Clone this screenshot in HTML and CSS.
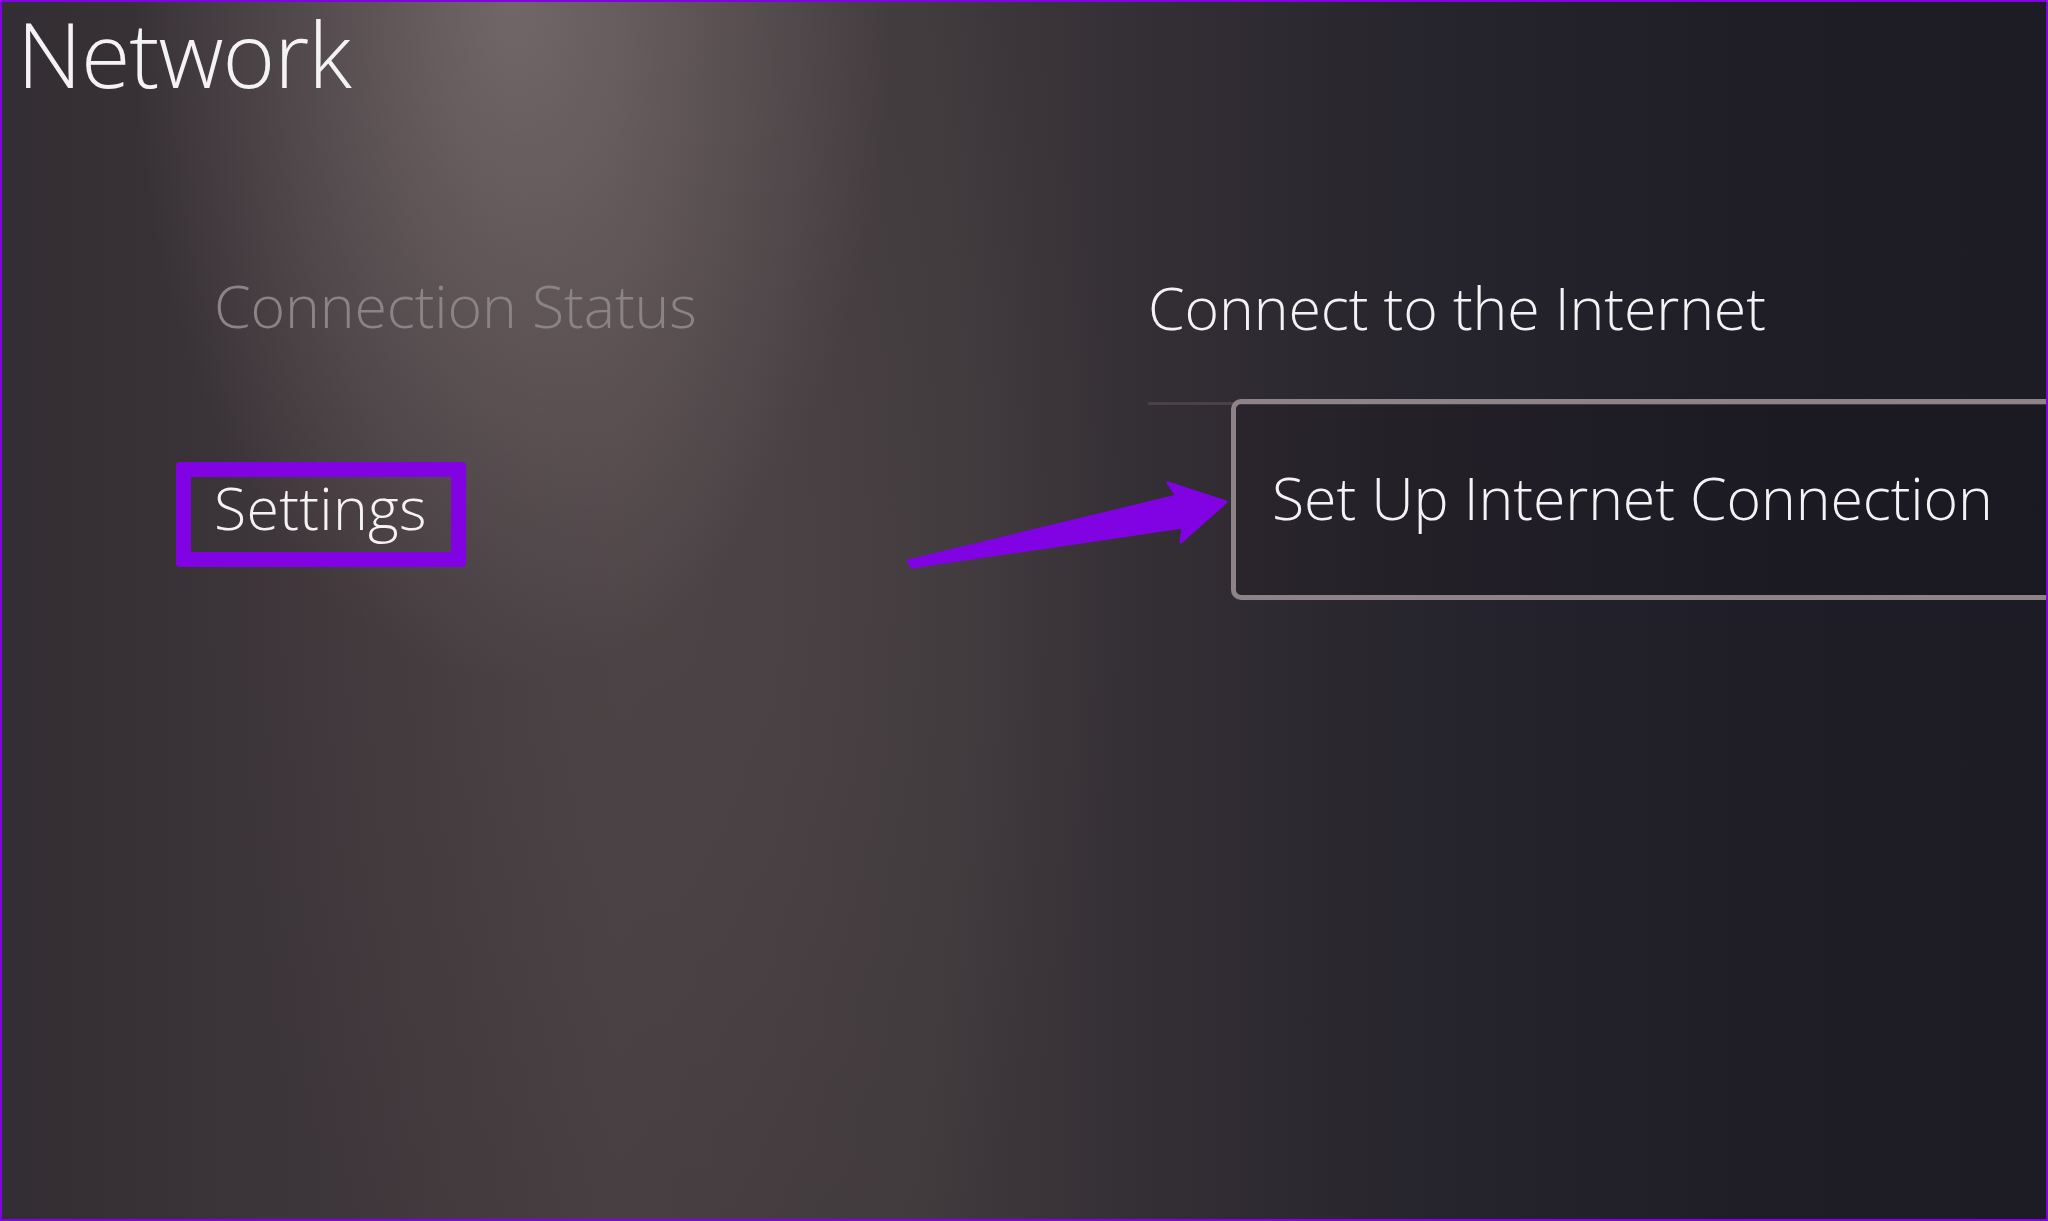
FILE: index.html
```html
<!DOCTYPE html>
<html>
<head>
    <title>Network</title>
    <link rel="stylesheet" href="styles.css">
</head>
<body>
    <div class="screen">
        <h1 class="page-title">Network</h1>

        <div class="columns">
            <!-- left menu -->
            <div class="menu">
                <div class="menu-item dim">Connection Status</div>
                <div class="menu-item selected">Settings</div>
            </div>

            <!-- right panel -->
            <div class="panel">
                <div class="panel-title">Connect to the Internet</div>
                <div class="option-list">
                    <div class="option focused">Set Up Internet Connection</div>
                </div>
            </div>
        </div>

        <svg class="annotation" viewBox="0 0 2048 1221" width="2048" height="1221">
            <polygon points="908,561 1177,496 1168,483 1226,502 1181,542 1183,527 912,567"
                     fill="#8103e3" stroke="#8103e3" stroke-width="3" stroke-linejoin="round"/>
        </svg>
    </div>
</body>
</html>
```

FILE: styles.css
```css
html, body {
    margin: 0;
    padding: 0;
    overflow: hidden;
}

body {
    width: 2048px;
    height: 1221px;
    font-family: "Open Sans", "Noto Sans", sans-serif;
    color: #f4f2f4;
}

.screen {
    position: relative;
    box-sizing: border-box;
    width: 2048px;
    height: 1221px;
    border: 2px solid #8103e3;
    overflow: hidden;
    background:
        radial-gradient(ellipse 380px 680px at 510px 0, rgba(150, 136, 136, 0.55), rgba(150, 136, 136, 0) 100%),
        radial-gradient(ellipse 460px 900px at 660px 560px, rgba(92, 80, 82, 0.38), rgba(92, 80, 82, 0) 100%),
        linear-gradient(90deg, #332e33 0%, #3b3438 12%, #453d40 30%, #403a3d 45%, #332e34 57%, #26242c 70%, #1f1e27 85%, #1d1c25 100%);
}

.page-title {
    margin: 0;
    padding: 2px 0 0 15px;
    font-size: 90px;
    font-weight: 300;
    line-height: 1.1;
    letter-spacing: -1px;
}

.columns {
    display: grid;
    grid-template-columns: 934px 1fr;
    margin-top: 173px;
    padding-left: 212px;
}

.menu {
    display: flex;
    flex-direction: column;
    align-items: flex-start;
    gap: 127px;
}

.menu-item,
.panel-title,
.option {
    font-size: 59px;
    font-weight: 300;
    line-height: 1;
    letter-spacing: -0.1px;
    white-space: nowrap;
}

.menu-item.dim {
    color: #8b8385;
}

.menu-item.selected {
    margin-left: -38px;
    padding: 1px 24px 15px 23px;
    border: 15px solid #8103e3;
    border-radius: 4px;
    letter-spacing: 0.3px;
}

.panel-title {
    margin-top: 2px;
}

.option-list {
    margin-top: 65px;
    border-top: 3px solid #4a4346;
}

.option {
    box-sizing: border-box;
    margin: -6px 0 0 83px;
    width: 900px;
    height: 201px;
    padding: 64px 0 0 36px;
    border: 5px solid #8e8488;
    border-right: none;
    border-radius: 10px 0 0 10px;
    background: rgba(12, 10, 16, 0.15);
}

.annotation {
    position: absolute;
    top: -2px;
    left: -2px;
    pointer-events: none;
}
```
